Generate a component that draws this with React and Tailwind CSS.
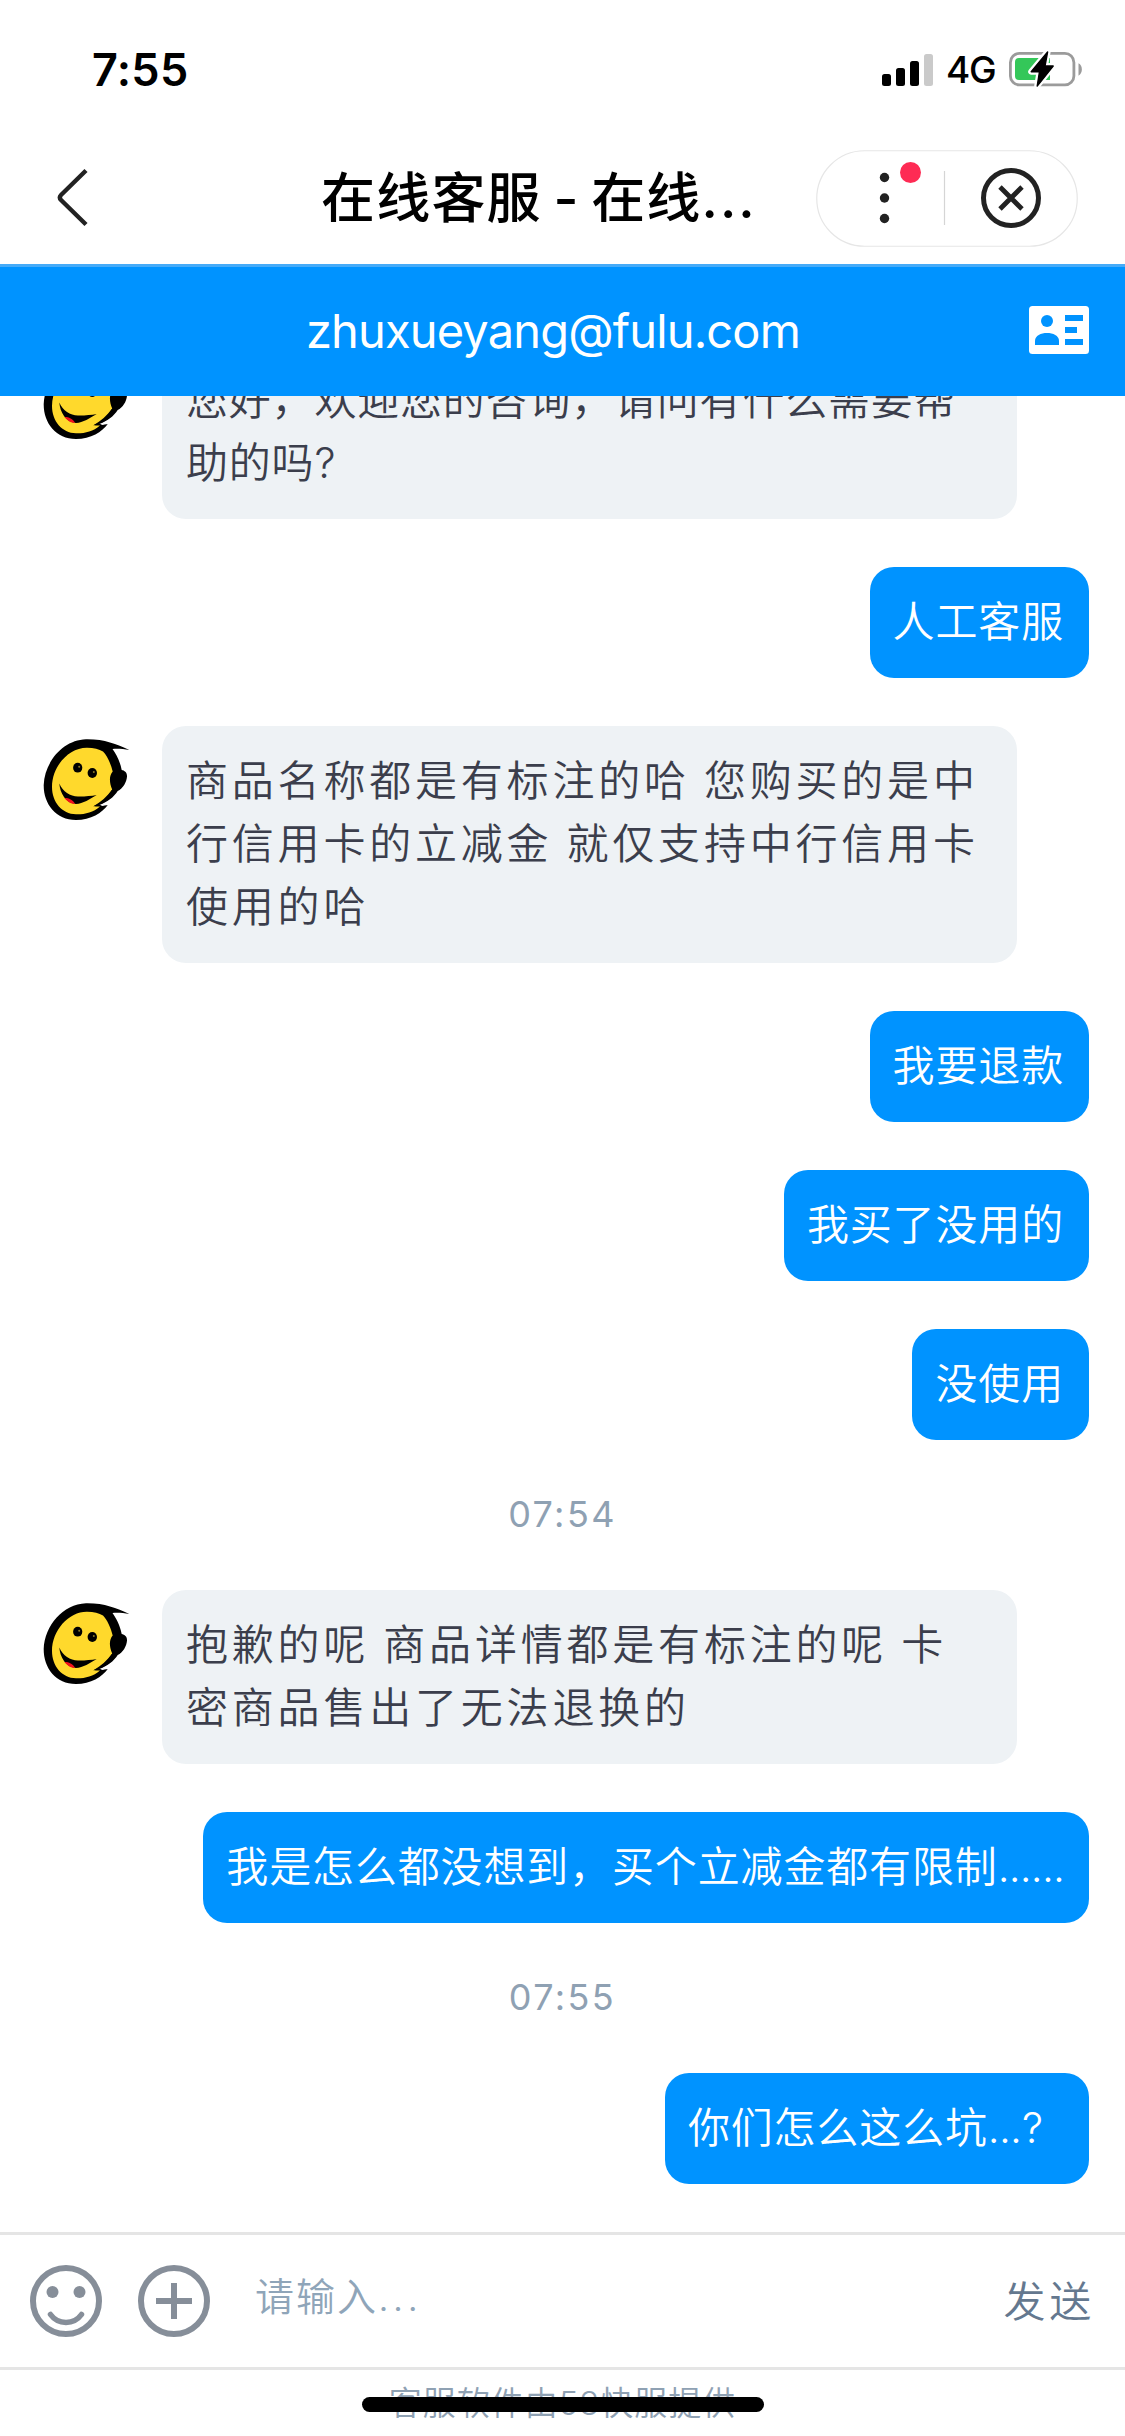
import React from 'react';

const messages = [
  { id: 1, type: 'agent', lines: ['您好，欢迎您的咨询，请问有什么需要帮', '助的吗?'], tight: true },
  { id: 2, type: 'user', text: '人工客服' },
  { id: 3, type: 'agent', lines: ['商品名称都是有标注的哈 您购买的是中', '行信用卡的立减金 就仅支持中行信用卡', '使用的哈'] },
  { id: 4, type: 'user', text: '我要退款' },
  { id: 5, type: 'user', text: '我买了没用的' },
  { id: 6, type: 'user', text: '没使用' },
  { id: 7, type: 'time', text: '07:54' },
  { id: 8, type: 'agent', lines: ['抱歉的呢 商品详情都是有标注的呢 卡', '密商品售出了无法退换的'] },
  { id: 9, type: 'user', text: '我是怎么都没想到，买个立减金都有限制', dots: '......' },
  { id: 10, type: 'time', text: '07:55' },
  { id: 11, type: 'user', text: '你们怎么这么坑', dots: '...', question: true },
];

const Avatar = () => (
  <svg width="102" height="102" viewBox="0 0 102 102" className="shrink-0">
    <path
      d="M7.7 59C8.5 36 27 14 50 13.3C68 13 80 18 93.3 24C87 22.8 81 22.5 76.5 23C80 28 84 35 85.7 44C88.5 44.5 91.3 46.5 91 50.5C90.7 56 87 62.5 81.7 65C78 71 71 76.5 63 79C67 79.5 70 78.5 72 78.8C66 87 55 94 40 94C20 94 7.5 78 7.7 59Z"
      fill="#000"
    />
    <path
      d="M16 61C16 40 33 21.5 51 21.7C58 21.7 63 23 67 25.5C71 29.5 75 38 76.7 45.5C73.2 49.5 73 56 76.2 63.5C71 70.5 65 76 57.5 80.3C60 80.6 62 80.2 64 80.5C57 86.5 49 88.5 40 88.3C26 88 16 76 16 61Z"
      fill="#ffd92c"
    />
    <path d="M57.3 80.3C65 77.5 71 72 76.2 63.5L80.5 65.5C75.5 72.5 66 79 57.3 80.3Z" fill="#000" />
    <path d="M66 79.2C70 77.8 74 75.8 77 73L73 79.2C70 79 68 79.8 64.5 80Z" fill="#fff" />
    <ellipse cx="41.7" cy="41.7" rx="4.6" ry="4.9" fill="#000" />
    <ellipse cx="56.3" cy="47" rx="4.7" ry="4.9" fill="#000" />
    <circle cx="43.2" cy="40.8" r="1" fill="#8a7a2a" />
    <circle cx="57.8" cy="46" r="1" fill="#8a7a2a" />
    <path d="M23.3 57.5C27 66 34 70.3 42 70.5C49 70.6 55 70 60.7 69C54 73 47 77.8 40 78C30 77.5 24 67 23.3 57.5Z" fill="#000" />
    <path d="M28.5 72C32 71.8 37 73.5 39 77.9C35 78 31 75.5 28.5 72Z" fill="#f2101c" />
  </svg>
);

const AgentMessage = ({ message }) => (
  <div className="flex items-start gap-6 pl-9">
    <Avatar />
    <div className="w-[855px] rounded-[24px] bg-[#eef2f5] px-6 pb-[25px] pt-[23px] text-[#3b3e4c]">
      {message.lines.map((line) => (
        <p
          key={line}
          className={
            message.tight
              ? 'whitespace-pre tracking-[0.8px] leading-[63px]'
              : 'whitespace-pre tracking-[3.8px] leading-[63px] [word-spacing:-1.5px]'
          }
        >
          {line}
        </p>
      ))}
    </div>
  </div>
);

const UserMessage = ({ message }) => (
  <div className="flex justify-end pr-9">
    <p className="whitespace-pre rounded-[24px] bg-[#0093ff] pb-[25px] pl-[23px] pr-[25px] pt-[23px] leading-[63px] tracking-[0.85px] text-white">
      {message.text}
      {message.dots && <span className="tracking-[-0.8px]">{message.dots}</span>}
      {message.question && <span className="inline-block w-[43px] pl-px">?</span>}
    </p>
  </div>
);

const TimeLabel = ({ text }) => (
  <p className="pb-px text-center text-[36px] font-normal leading-[53px] tracking-[2.4px] text-[#8fa1b3]">{text}</p>
);

const StatusBar = () => (
  <div className="flex h-[132px] items-start justify-between pl-[92px] pr-[42px] pt-[49px]">
    <span className="text-[45px] font-semibold leading-[42px] tracking-[0.3px]">7:55</span>
    <div className="flex h-[42px] items-center">
      <svg width="52" height="34" viewBox="0 0 52 34">
        <rect x="0" y="21" width="9" height="12" rx="2.5" />
        <rect x="14" y="15" width="9" height="18" rx="2.5" />
        <rect x="28" y="8" width="9" height="25" rx="2.5" />
        <rect x="42" y="1" width="9" height="32" rx="2.5" fill="#cacaca" />
      </svg>
      <span className="ml-[12px] w-[63px] text-[37px] font-[450] leading-[42px] tracking-[-1.4px]">4G</span>
      <svg width="74" height="38" viewBox="0 0 74 38" overflow="visible">
        <rect x="1.4" y="2.4" width="63.5" height="31.5" rx="9" fill="none" stroke="#9b9b9b" strokeWidth="2.8" />
        <path d="M69.5 12.3C74 14.5 74 22.5 69.5 24.7Z" fill="#9b9b9b" />
        <path d="M10 7H41V29H10Q6 29 6 25V11Q6 7 10 7Z" fill="#34c759" />
        <path d="M38.6 1L22.2 20.7H30.5L28.2 35L44.2 15H36Z" fill="#000" stroke="#fff" strokeWidth="6" paintOrder="stroke" strokeLinejoin="round" />
        <path d="M38.6 1L22.2 20.7H30.5L28.2 35L44.2 15H36Z" fill="#000" stroke="#000" strokeWidth="1.4" strokeLinejoin="round" />
      </svg>
    </div>
  </div>
);

const TitleBar = () => (
  <div className="flex h-[132px] items-center">
    <svg width="32" height="60" viewBox="0 0 32 60" className="ml-[56px]">
      <path d="M30 2.5L5 27Q2.5 29.5 5 32L30 56.5" fill="none" stroke="#222" strokeWidth="4.4" />
    </svg>
    <h1 className="ml-[233px] w-[495px] whitespace-pre pt-[2px] text-[54px] font-medium leading-[80px] tracking-[1.2px] [word-spacing:-4px]">
      在线客服 - 在线<span className="tracking-[2px]">...</span>
    </h1>
    <svg width="262" height="97" viewBox="0 0 262 97">
      <rect x="0.75" y="0.75" width="260.5" height="95.5" rx="47.75" fill="#fff" stroke="#e6e6e6" strokeWidth="1.2" />
      <g fill="#222">
        <circle cx="68.5" cy="27.5" r="4.7" />
        <circle cx="68.5" cy="48" r="4.7" />
        <circle cx="68.5" cy="68.5" r="4.7" />
      </g>
      <circle cx="94.5" cy="22.5" r="10.5" fill="#fe2b54" />
      <path d="M128.5 21V75" stroke="#d5d5d5" strokeWidth="1.2" />
      <circle cx="195" cy="48" r="27.5" fill="none" stroke="#222" strokeWidth="5" />
      <path d="M184 37L206 59M206 37L184 59" stroke="#222" strokeWidth="4.8" />
    </svg>
  </div>
);

const ContactBar = () => (
  <div className="flex h-[132px] items-center border-t-[3px] border-[#46abf8] bg-[#0093ff] pb-[3px] pr-9 text-white">
    <span className="ml-[306px] flex-1 pt-[2px] text-[47px] leading-[72px] tracking-[-0.85px]">zhuxueyang@fulu.com</span>
    <svg width="60" height="48" viewBox="0 0 60 48">
      <rect width="60" height="48" rx="3.5" fill="#fff" />
      <g fill="#0093ff">
        <circle cx="18" cy="15" r="6" />
        <path d="M6 39V35C6 29.5 12 27 18 27S30 29.5 30 35V39Z" />
        <rect x="36" y="9" width="18" height="6" />
        <rect x="36" y="21" width="12" height="6" />
        <rect x="36" y="33" width="18" height="6" />
      </g>
    </svg>
  </div>
);

const Composer = () => (
  <div className="flex h-[138px] items-center border-y-[3px] border-[#e5e5e5] pl-[30px]">
    <svg width="72" height="72" viewBox="0 0 72 72">
      <circle cx="36" cy="36" r="33" fill="none" stroke="#868e99" strokeWidth="6" />
      <circle cx="22.5" cy="27" r="6" fill="#868e99" />
      <circle cx="49.5" cy="27" r="6" fill="#868e99" />
      <path d="M20.5 49.5C28 60 44 60 51.5 49.5" fill="none" stroke="#868e99" strokeWidth="5.5" strokeLinecap="round" />
    </svg>
    <svg width="72" height="72" viewBox="0 0 72 72" className="ml-9">
      <circle cx="36" cy="36" r="33" fill="none" stroke="#868e99" strokeWidth="6" />
      <path d="M18 36H54M36 18V54" stroke="#868e99" strokeWidth="6" />
    </svg>
    <span className="ml-[45px] flex-1 pb-[9px] text-[39px] font-[350] leading-[58px] tracking-[2px] text-[#8fa5b9]">
      请输入<span className="tracking-[3.6px]">...</span>
    </span>
    <button className="mr-[30px] text-[42px] font-[350] leading-[63px] tracking-[3.8px] text-[#64788f]">发送</button>
  </div>
);

const App = () => {
  return (
    <div className="flex h-[2436px] w-[1125px] flex-col overflow-hidden bg-white font-['Inter','Noto_Sans_CJK_SC',sans-serif] text-[42px] text-black">
      <StatusBar />
      <TitleBar />
      <ContactBar />
      <div className="flex min-h-0 flex-1 flex-col justify-end gap-12 overflow-hidden pb-12 font-[350]">
        {messages.map((m) => {
          if (m.type === 'agent') return <AgentMessage key={m.id} message={m} />;
          if (m.type === 'user') return <UserMessage key={m.id} message={m} />;
          return <TimeLabel key={m.id} text={m.text} />;
        })}
      </div>
      <Composer />
      <div className="relative h-[66px] text-center">
        <p className="pt-[8px] text-[33px] font-[350] leading-[50px] tracking-[1px] text-[#8fa1b3]">客服软件由53快服提供</p>
        {/* home indicator */}
        <div className="absolute left-[362px] top-[27px] h-[15px] w-[402px] rounded-full bg-black" />
      </div>
    </div>
  );
};

export default App;
